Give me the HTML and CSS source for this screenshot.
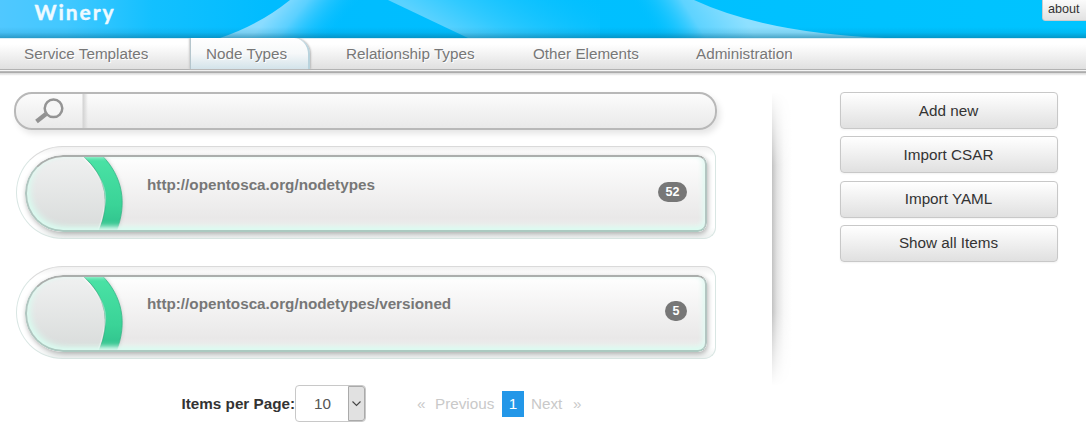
FILE: index.html
```
<!DOCTYPE html>
<html lang="en">
<head>
<meta charset="utf-8">
<title>Winery</title>
<link rel="stylesheet" href="styles.css">
</head>
<body>
<header class="header">
  <svg class="header-art" width="1086" height="38" viewBox="0 0 1086 38" aria-hidden="true">
    <defs>
      <linearGradient id="base"><stop offset="0" stop-color="#50c8ff"/><stop offset=".06" stop-color="#42c8ff"/><stop offset=".14" stop-color="#13c0ff"/><stop offset=".25" stop-color="#00bcff"/><stop offset="1" stop-color="#00c4ff"/></linearGradient>
      <linearGradient id="beam" gradientUnits="userSpaceOnUse" x1="265" y1="20" x2="312" y2="58"><stop offset="0" stop-color="#8adcff"/><stop offset=".35" stop-color="#5bd0ff"/><stop offset="1" stop-color="#0cc0ff" stop-opacity="0"/></linearGradient>
      <linearGradient id="beam2" gradientUnits="userSpaceOnUse" x1="428" y1="19" x2="490" y2="-80"><stop offset="0" stop-color="#5ad2ff"/><stop offset=".25" stop-color="#32caff"/><stop offset="1" stop-color="#00bfff" stop-opacity="0"/></linearGradient>
      <linearGradient id="wave" gradientUnits="userSpaceOnUse" x1="640" y1="14" x2="712" y2="-32"><stop offset="0" stop-color="#00bfff" stop-opacity="0"/><stop offset=".5" stop-color="#5ed3ff"/><stop offset="1" stop-color="#8ee0ff"/></linearGradient>
      <linearGradient id="edge" x2="0" y2="1"><stop offset="0" stop-color="#056b90" stop-opacity="0"/><stop offset=".5" stop-color="#056b90" stop-opacity=".12"/><stop offset="1" stop-color="#056b90" stop-opacity=".5"/></linearGradient>
    </defs>
    <path fill="url(#base)" d="M0 0h1086v38H0z"/>
    <path fill="url(#beam)" d="M290 0Q259 25 220 38H468L388 0z"/>
    <path fill="url(#beam2)" d="M388 0L468 38H600V0z"/>
    <path fill="url(#wave)" d="M600 0H694Q765 33 885 38H600z"/>
    <path fill="url(#edge)" d="M0 27h1086v11H0z"/>
    <text class="logo" x="34.500" y="20" textLength="79">Winery</text>
  </svg>
  <button class="about">about</button>
</header>
<nav class="nav">
  <a class="tab tab-service">Service Templates</a>
  <a class="tab tab-active">Node Types</a>
  <a class="tab tab-relationship">Relationship Types</a>
  <a class="tab tab-other">Other Elements</a>
  <a class="tab">Administration</a>
</nav>
<div class="nav-edge"></div>
<main class="main">
  <section class="list">
    <div class="search">
      <span class="search-icon">
        <svg width="32" height="28" viewBox="0 0 32 28" aria-hidden="true"><path d="M3.500 24.5L13 17" fill="none" stroke="#929292" stroke-width="4.2"/><circle cx="20.500" cy="11.3" r="8.8" fill="#f6f6f6" stroke="#949494" stroke-width="2.5"/></svg>
      </span>
    </div>
    <article class="card">
      <div class="card-body">
        <svg class="card-art" width="110" height="76" viewBox="0 0 110 76" aria-hidden="true">
          <defs>
            <linearGradient id="disc" x2="0" y2="1"><stop stop-color="#f0f1f1"/><stop offset="1" stop-color="#d8dbda"/></linearGradient>
            <linearGradient id="green" x2="0" y2="1"><stop stop-color="#4be3a6"/><stop offset=".65" stop-color="#3ad397"/><stop offset="1" stop-color="#2fbe8b"/></linearGradient>
            <filter id="soft" x="-50%" y="-50%" width="200%" height="200%"><feGaussianBlur stdDeviation="2.5"/></filter>
          </defs>
          <path d="M60 0H77Q107 35 90 76H75z" fill="#777" opacity=".65" filter="url(#soft)"/>
          <path d="M0 0H58Q92 31 73 76H0z" fill="url(#disc)"/>
          <path d="M58 0H77.500C97 20 103 47 91 76H73.500C86.500 45 81 20 58 0z" fill="url(#green)" stroke="#35b888" stroke-width=".8"/>
          <path d="M56 0Q85 26 79.500 50Q78 63 72 76" fill="none" stroke="#fff" stroke-opacity=".4" stroke-width="1.500"/>
        </svg>
        <h2 class="card-title">http://opentosca.org/nodetypes</h2>
        <span class="badge">52</span>
      </div>
    </article>
    <article class="card card-second">
      <div class="card-body">
        <svg class="card-art" width="110" height="76" viewBox="0 0 110 76" aria-hidden="true">
          <path d="M60 0H77Q107 35 90 76H75z" fill="#777" opacity=".65" filter="url(#soft)"/>
          <path d="M0 0H58Q92 31 73 76H0z" fill="url(#disc)"/>
          <path d="M58 0H77.500C97 20 103 47 91 76H73.500C86.500 45 81 20 58 0z" fill="url(#green)" stroke="#35b888" stroke-width=".8"/>
          <path d="M56 0Q85 26 79.500 50Q78 63 72 76" fill="none" stroke="#fff" stroke-opacity=".4" stroke-width="1.500"/>
        </svg>
        <h2 class="card-title">http://opentosca.org/nodetypes/versioned</h2>
        <span class="badge">5</span>
      </div>
    </article>
    <div class="pager">
      <span class="pager-label">Items per Page:</span>
      <div class="select">
        <span class="select-value">10</span>
        <span class="select-arrow"><svg width="9" height="6" viewBox="0 0 9 6" aria-hidden="true"><path d="M.5.5l4 4 4-4" fill="none" stroke="#444" stroke-width="1.100"/></svg></span>
      </div>
      <div class="pages">
        <span class="page-arrow">«</span>
        <span class="page-prev">Previous</span>
        <span class="page-current">1</span>
        <span class="page-next">Next</span>
        <span class="page-arrow">»</span>
      </div>
    </div>
  </section>
  <div class="divider"></div>
  <aside class="actions">
    <button class="action">Add new</button>
    <button class="action">Import CSAR</button>
    <button class="action">Import YAML</button>
    <button class="action">Show all Items</button>
  </aside>
</main>
</body>
</html>
```
FILE: styles.css
```
* { box-sizing: border-box; }
body {
  margin: 0;
  width: 1086px;
  height: 434px;
  overflow: hidden;
  background: #fff;
  color: #333;
  font: 15.25px/20px "Liberation Sans", Arial, sans-serif;
}
.header { position: relative; height: 38px; }
.header-art { display: block; }
.logo { font: 700 21px Lato, sans-serif; fill: #effaff; stroke: #effaff; stroke-width: .4px; }
.about {
  position: absolute;
  top: -4px;
  right: -4px;
  width: 48px;
  height: 25px;
  padding: 0 5px;
  border: 1px solid #ccc;
  border-radius: 3px;
  background: linear-gradient(#fff, #e2e2e2);
  color: #333;
  font: 12.6px/18px "Liberation Sans", Arial, sans-serif;
  text-align: left;
}
.nav {
  display: flex;
  height: 31px;
  padding-left: 24px;
  background: linear-gradient(#fff 20%, #e0e0e0);
  box-shadow: inset 0 1px #d8eef7;
  color: #777;
  text-shadow: 1px 1px 0 #fff;
}
.tab { height: 31px; line-height: 32px; white-space: nowrap; }
.tab-service { width: 166px; }
.tab-active {
  width: 120px;
  padding-left: 15px;
  border-left: 1px solid #b5c6cd;
  border-right: 2px solid #b9d3dd;
  border-top-right-radius: 16px;
  background: linear-gradient(#fff, #f6f8f9 50%, #d3e3ea);
  box-shadow: 1px 0 2px #b9b9b9, -1px 0 2px #ccc;
}
.tab-relationship { width: 223px; padding-left: 36px; }
.tab-other { width: 163px; }
.nav-edge {
  height: 7px;
  background: linear-gradient(#b2b2b2 0 1px, #f5f5f5 1px 2px, #b9b9b9 2px 3px, #acacac 3px 4px, #dedede 4px 5px, #f5f5f5 6px, #fff);
}
.main { display: flex; height: 358px; padding-top: 16px; }
.list { width: 772px; padding-left: 14px; }
.search {
  width: 703px;
  height: 38px;
  border: 2px solid #b8b8b8;
  border-radius: 18px;
  background: linear-gradient(#fcfcfc, #e9e9e9);
  box-shadow: 3px 4px 6px rgba(0, 0, 0, .1);
}
.search-icon {
  display: block;
  width: 72px;
  height: 34px;
  padding: 3px 0 0 17px;
  background: linear-gradient(90deg, transparent 66px, #d3d3d3 67px, transparent 72px);
}
.card {
  width: 700px;
  height: 93px;
  margin: 16px 0 0 2px;
  padding: 8px;
  border: 1px solid #d9e6e3;
  border-top-color: #dadada;
  border-radius: 47px 12px 12px 47px;
  background: linear-gradient(#f1f1f1, #fff 10% 88%, #edf1f0);
}
.card-second { margin-top: 27px; }
.card-body {
  position: relative;
  display: flex;
  align-items: center;
  height: 77px;
  overflow: hidden;
  border-radius: 38px 9px 9px 38px;
  background: linear-gradient(#fff, #e9e8e8 82%, #f0f0f0);
  box-shadow: 1px 2px 5px rgba(0, 0, 0, .3);
}
.card-body::after {
  content: "";
  position: absolute;
  inset: 0;
  border: 2px solid;
  border-color: #aaaeac #b3c5c1 #abc9c0 #b0c6c0;
  border-radius: 38px 9px 9px 38px;
  box-shadow: inset 3px -3px 6px #d9fcf0, inset -3px -1px 5px #e4f8f2;
}
.card-art { display: block; flex: none; }
.card-title {
  flex: 1;
  margin: 0 0 17px 12px;
  color: #777;
  font-size: 15.25px;
  line-height: 20px;
}
.card-second .card-title { margin-bottom: 19px; }
.badge {
  min-width: 22px;
  height: 20px;
  margin: 0 20px 4px 0;
  padding: 0 7.500px;
  border-radius: 10px;
  background: #777;
  color: #fff;
  font: 700 12.500px/20px "Liberation Sans", Arial, sans-serif;
}
.card-second .badge { margin-bottom: 6px; }
.pager { display: flex; align-items: center; height: 37px; margin-top: 26px; padding-left: 167.500px; }
.pager-label { width: 113.500px; font-weight: 700; white-space: nowrap; }
.select {
  display: flex;
  width: 71px;
  height: 37px;
  border: 1px solid #c8c8c8;
  border-radius: 4px;
}
.select-value { width: 52px; padding-left: 18px; color: #555; line-height: 36px; }
.select-arrow {
  display: flex;
  align-items: center;
  justify-content: center;
  width: 17px;
  border: 1px solid #aaa;
  border-radius: 0 3px 3px 0;
  background: #e1e1e1;
}
.pages { display: flex; align-items: center; margin-left: 51px; color: #c9c9c9; }
.page-arrow { width: 18px; }
.page-prev { width: 67px; }
.page-current {
  width: 22px;
  height: 26px;
  background: #2397e8;
  color: #fff;
  line-height: 26px;
  text-align: center;
}
.page-next { width: 48px; padding-left: 7px; margin-right: 1px; }
.divider {
  width: 20px;
  height: 294px;
  background: linear-gradient(90deg, #c2c2c2, #e2e2e2 25%, #f8f8f8 60%, #fff);
  mask-image: linear-gradient(transparent, #000 25% 75%, transparent);
}
.actions { display: flex; flex-direction: column; gap: 7.300px; margin-left: 48px; }
.action {
  width: 218px;
  height: 37px;
  padding: 0 1px 0 0;
  border: 1px solid #c8c8c8;
  border-radius: 4px;
  background: linear-gradient(#fff, #e0e0e0);
  box-shadow: 0 1px 2px rgba(0, 0, 0, .05);
  color: #333;
  font: 15.25px/20px "Liberation Sans", Arial, sans-serif;
}
```
